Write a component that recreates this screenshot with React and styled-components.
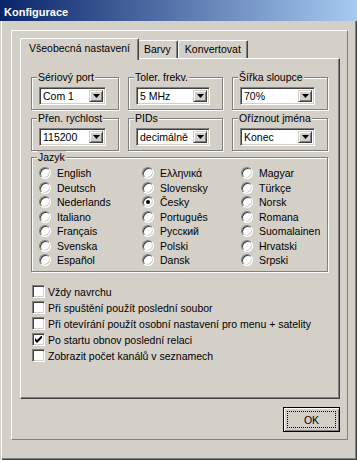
import React from "react";
import styled, { createGlobalStyle } from "styled-components";

const GlobalStyle = createGlobalStyle`
  html, body {
    margin: 0;
    padding: 0;
    background: #d4d0c8;
  }
  body {
    font-family: "Liberation Sans", Arial, sans-serif;
    font-size: 10.5px;
    color: #000;
  }
  * {
    box-sizing: border-box;
  }
`;

const combos = [
  { label: "Sériový port", value: "Com 1" },
  { label: "Toler. frekv.", value: "5 MHz" },
  { label: "Šířka sloupce", value: "70%" },
  { label: "Přen. rychlost", value: "115200" },
  { label: "PIDs", value: "decimálně" },
  { label: "Oříznout jména", value: "Konec" },
];

const languages = [
  "English", "Deutsch", "Nederlands", "Italiano", "Français", "Svenska", "Español",
  "Ελληνικά", "Slovensky", "Česky", "Português", "Русский", "Polski", "Dansk",
  "Magyar", "Türkçe", "Norsk", "Romana", "Suomalainen", "Hrvatski", "Srpski",
];

const options = [
  { text: "Vždy navrchu", checked: false },
  { text: "Při spuštění použít poslední soubor", checked: false },
  { text: "Při otevírání použít osobní nastavení pro menu + satelity", checked: false },
  { text: "Po startu obnov poslední relaci", checked: true },
  { text: "Zobrazit počet kanálů v seznamech", checked: false },
];

export default function App() {
  return (
    <>
      <GlobalStyle />
      <Window>
        <TitleBar>Konfigurace</TitleBar>
        <Body>
          <Panel>
            <TabStrip>
              <Tab $active>Všeobecná nastavení</Tab>
              <Tab>Barvy</Tab>
              <Tab>Konvertovat</Tab>
            </TabStrip>
            <Page>
              <Groups>
                {combos.map((c) => (
                  <Group key={c.label}>
                    <Legend>{c.label}</Legend>
                    <Combo>
                      <ComboText>{c.value}</ComboText>
                      <DropButton>
                        <svg width="7" height="4" viewBox="0 0 7 4">
                          <path d="M0 0h7L3.5 4z" fill="#000" />
                        </svg>
                      </DropButton>
                    </Combo>
                  </Group>
                ))}
                <LangGroup>
                  <Legend>Jazyk</Legend>
                  <RadioGrid>
                    {languages.map((l) => (
                      <RadioItem key={l}>
                        <Radio $checked={l === "Česky"} />
                        <span>{l}</span>
                      </RadioItem>
                    ))}
                  </RadioGrid>
                </LangGroup>
              </Groups>
              <CheckList>
                {options.map((o) => (
                  <CheckItem key={o.text}>
                    <CheckBox>
                      {o.checked && (
                        <svg width="7" height="7" viewBox="0 0 7 7">
                          <path d="M0 2l2 2 5-5v3L2 7 0 5z" fill="#000" />
                        </svg>
                      )}
                    </CheckBox>
                    <span>{o.text}</span>
                  </CheckItem>
                ))}
              </CheckList>
            </Page>
            <ButtonRow>
              <Button>
                <FocusRing>OK</FocusRing>
              </Button>
            </ButtonRow>
          </Panel>
        </Body>
      </Window>
    </>
  );
}

const Window = styled.div`
  width: 357px;
  height: 460px;
  display: flex;
  flex-direction: column;
  background: #d4d0c8;
`;

const TitleBar = styled.div`
  height: 21px;
  flex: none;
  display: flex;
  align-items: center;
  padding: 2px 0 0 4px;
  background: linear-gradient(to right, #0a246a, #a6caf0);
  color: #fff;
  font-weight: bold;
  font-size: 11px;
`;

const Body = styled.div`
  flex: 1;
  padding: 9px 9px 0 11px;
  box-shadow: inset 1px 0 0 #d4d0c8, inset 2px 0 0 #fff,
    inset -1px -1px 0 #404040, inset -2px -2px 0 #808080;
`;

const Panel = styled.div`
  width: 337px;
  height: 410px;
  display: flex;
  flex-direction: column;
  padding: 7px 7px 7px 8px;
  border: 1px solid;
  border-color: #fff #808080 #808080 #fff;
`;

const TabStrip = styled.div`
  position: relative;
  z-index: 1;
  height: 20px;
  display: flex;
  align-items: flex-end;
  padding-left: 2px;
`;

const Tab = styled.div`
  position: relative;
  z-index: ${(p) => (p.$active ? 2 : 1)};
  height: ${(p) => (p.$active ? "22px" : "18px")};
  margin: ${(p) => (p.$active ? "0 -2px -2px" : "0")};
  padding: ${(p) => (p.$active ? "3px 8px 0 8px" : "2px 6px 0 6px")};
  line-height: 13px;
  white-space: nowrap;
  background: #d4d0c8;
  border-top: 1px solid #fff;
  border-left: 1px solid #fff;
  border-right: 1px solid #404040;
  border-radius: 2px 2px 0 0;
  box-shadow: inset -1px 0 0 #808080;
`;

const Page = styled.div`
  height: 341px;
  padding: 12px 9px 0 10px;
  border: 1px solid;
  border-color: #fff #404040 #404040 #fff;
  box-shadow: inset -1px -1px 0 #808080;
`;

const Groups = styled.div`
  display: grid;
  grid-template-columns: 88px 95px 96px;
  column-gap: 9px;
  row-gap: 2px;
`;

const Group = styled.fieldset`
  margin: 0;
  min-width: 0;
  padding: 3px 12px 4px 7px;
  border: 1px solid #808080;
  box-shadow: 1px 1px 0 #fff, inset 1px 1px 0 #fff;
`;

const LangGroup = styled(Group)`
  grid-column: 1 / -1;
  margin-top: -2px;
  padding: 2px 0 3px 7px;
`;

const Legend = styled.legend`
  margin-left: -2px;
  padding: 0 1px;
  height: 13px;
  line-height: 13px;
  background: #d4d0c8;
  white-space: nowrap;
`;

const Combo = styled.div`
  height: 18px;
  display: flex;
  align-items: stretch;
  padding: 2px;
  background: #fff;
  border: 1px solid;
  border-color: #808080 #fff #fff #808080;
  box-shadow: inset 1px 1px 0 #404040, inset -1px -1px 0 #d4d0c8;
`;

const ComboText = styled.div`
  flex: 1;
  padding-left: 1px;
  line-height: 12px;
  white-space: nowrap;
  overflow: hidden;
`;

const DropButton = styled.div`
  width: 14px;
  flex: none;
  display: flex;
  align-items: center;
  justify-content: center;
  background: #d4d0c8;
  border: 1px solid;
  border-color: #d4d0c8 #404040 #404040 #d4d0c8;
  box-shadow: inset 1px 1px 0 #fff, inset -1px -1px 0 #808080;

  svg {
    display: block;
  }
`;

const RadioGrid = styled.div`
  display: grid;
  grid-template-columns: 103px 99px 1fr;
  grid-template-rows: repeat(7, 14.5px);
  grid-auto-flow: column;
`;

const RadioItem = styled.label`
  display: flex;
  align-items: center;
  gap: 6px;
  white-space: nowrap;
`;

const Radio = styled.span`
  width: 12px;
  height: 12px;
  flex: none;
  display: flex;
  align-items: center;
  justify-content: center;
  border-radius: 50%;
  background: #fff;
  border: 1px solid;
  border-color: #808080 #fff #fff #808080;
  box-shadow: inset 1px 1px 0 #404040, inset -1px -1px 0 #d4d0c8;

  &::after {
    content: "";
    width: 4px;
    height: 4px;
    border-radius: 50%;
    background: ${(p) => (p.$checked ? "#000" : "transparent")};
  }
`;

const CheckList = styled.div`
  margin-top: 12px;
  padding-left: 1px;
  display: flex;
  flex-direction: column;
`;

const CheckItem = styled.label`
  height: 16px;
  display: flex;
  align-items: center;
  gap: 3px;
  white-space: nowrap;
`;

const CheckBox = styled.span`
  width: 13px;
  height: 13px;
  flex: none;
  display: flex;
  align-items: center;
  justify-content: center;
  background: #fff;
  border: 1px solid;
  border-color: #808080 #fff #fff #808080;
  box-shadow: inset 1px 1px 0 #404040, inset -1px -1px 0 #d4d0c8;
`;

const ButtonRow = styled.div`
  margin-top: 8px;
  display: flex;
  justify-content: flex-end;
`;

const Button = styled.div`
  width: 57px;
  height: 25px;
  padding: 3px;
  background: #d4d0c8;
  border: 1px solid #000;
  box-shadow: inset 1px 1px 0 #fff, inset -1px -1px 0 #808080;
`;

const FocusRing = styled.div`
  height: 100%;
  display: flex;
  align-items: center;
  justify-content: center;
  border: 1px dotted #000;
`;
